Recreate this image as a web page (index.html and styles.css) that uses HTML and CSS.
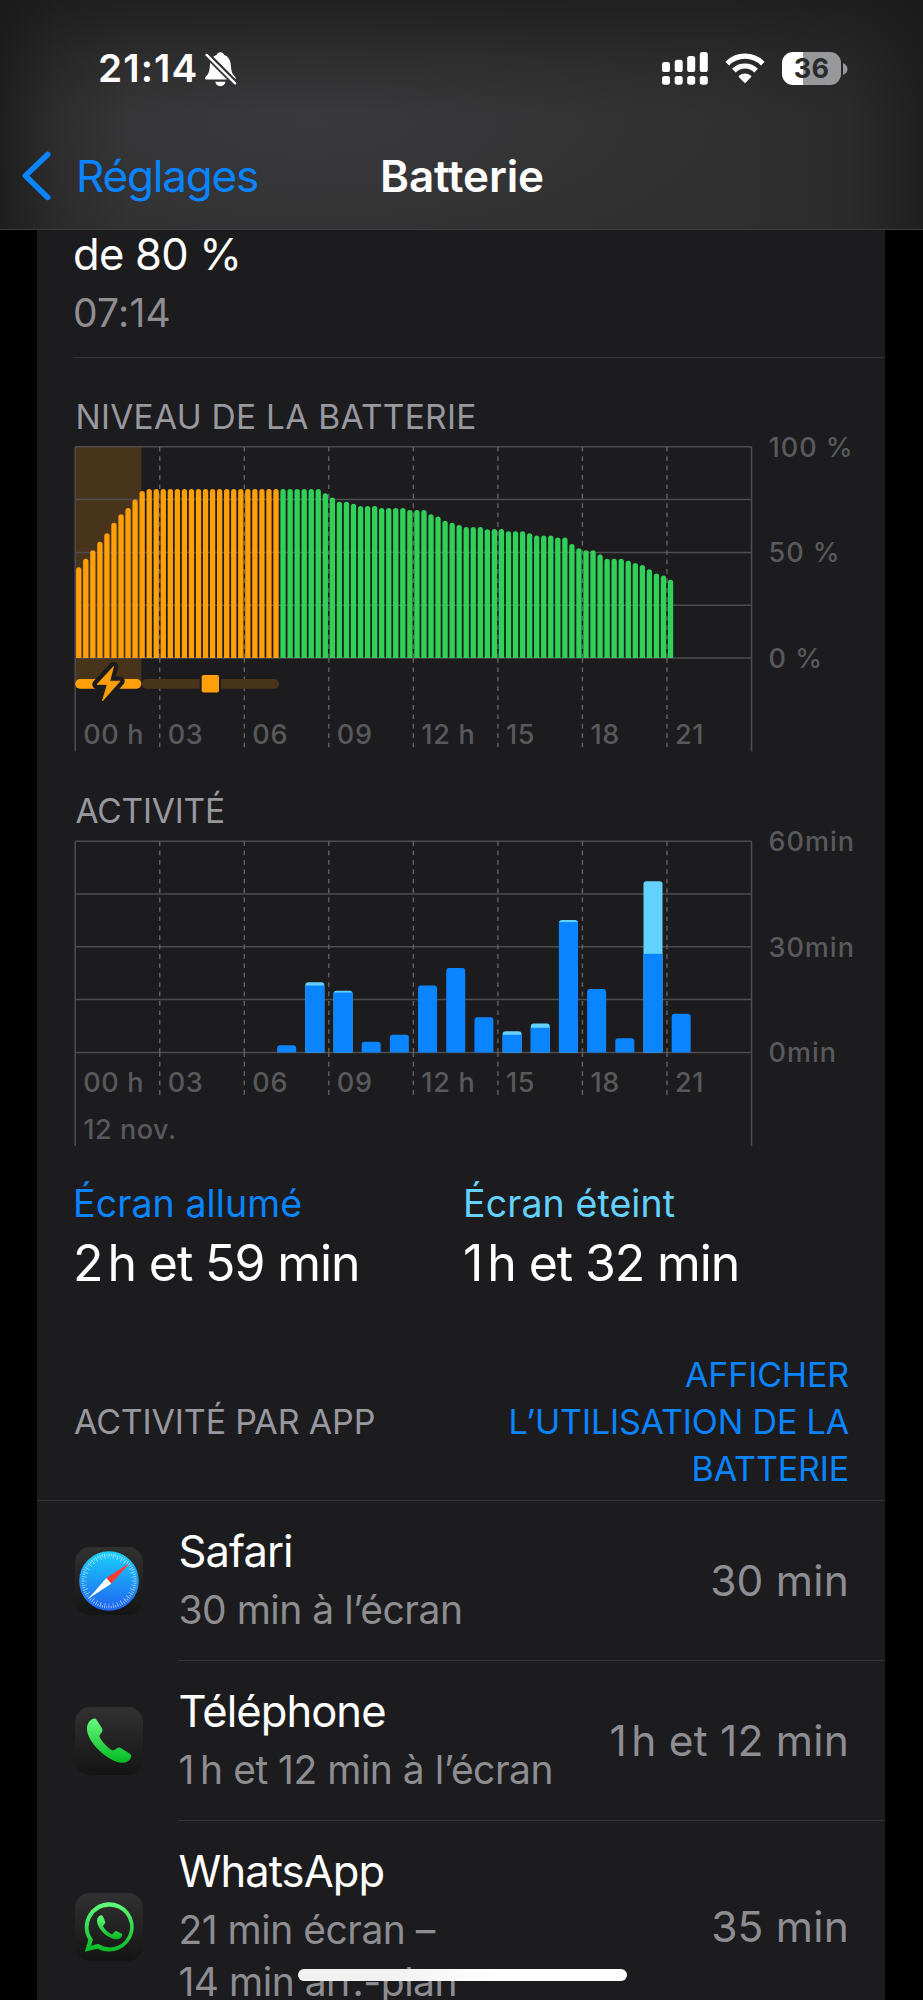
FILE: index.html
```html
<!DOCTYPE html>
<html lang="fr">
<head>
<meta charset="utf-8">
<title>Batterie</title>
<link rel="stylesheet" href="styles.css">
</head>
<body>
<header class="header">
  <div class="status">
    <div class="status-left">
      <span class="clock">21:14</span>
      <svg class="bell" width="32" height="35" viewBox="0 0 32 35">
        <path fill="#fff" d="M1.2 27.6c-1.4 0-1.5-1.7-.3-3C3 22.500 4.400 20.500 4.800 14.500 5.200 8 7.600 4.300 11.700 3.100 12.200 1.200 13.500.300 15.400.300s3.200.900 3.700 2.800c4.100 1.200 6.500 4.900 6.900 11.400.4 6 1.800 8 3.900 10.100 1.200 1.300 1.100 3-.3 3zM10.300 29.800h10.200c-.3 2.700-2.400 4.400-5.100 4.400s-4.800-1.700-5.100-4.400z"/>
        <path stroke="#333335" stroke-width="6.400" stroke-linecap="round" d="M2 3l28.500 28.500"/>
        <path stroke="#fff" stroke-width="2.300" stroke-linecap="round" d="M1.600 2.900l28.500 28.500"/>
      </svg>
    </div>
    <div class="status-right">
      <svg width="46" height="33" viewBox="0 0 46 33" fill="#fff">
        <rect x="0" y="10" width="8" height="10" rx="2.600"/><rect x="12.700" y="7.800" width="8" height="12.200" rx="2.600"/><rect x="25.200" y="4" width="8" height="16" rx="2.600"/><rect x="37.800" y="0" width="8" height="20" rx="2.600"/>
        <rect x="0" y="24" width="8" height="8.700" rx="2.600"/><rect x="12.700" y="24" width="8" height="8.700" rx="2.600"/><rect x="25.200" y="24" width="8" height="8.700" rx="2.600"/><rect x="37.800" y="24" width="8" height="8.700" rx="2.600"/>
      </svg>
      <svg class="wifi" width="40" height="31" viewBox="0 0 40 31">
        <g fill="none" stroke="#fff" stroke-width="5.200"><path d="M2.200 10.600a25 25 0 0 1 35.600 0"/><path d="M8.900 17.600a15.700 15.700 0 0 1 22.200 0"/></g>
        <path fill="#fff" d="M20 30.300l-6-6.100q-.8-.9.200-1.600a9.300 9.300 0 0 1 11.600 0q1 .7.200 1.600z"/>
      </svg>
      <span class="level">36</span>
      <svg class="nub" width="5" height="12" viewBox="0 0 5 12"><path fill="#98989a" d="M0 0c6 2.500 6 9.500 0 12z"/></svg>
    </div>
  </div>
  <nav class="nav">
    <a class="back"><svg width="30" height="50" viewBox="0 0 30 50"><path fill="none" stroke="#0a84ff" stroke-width="5.600" stroke-linecap="round" stroke-linejoin="round" d="M25.700 3.400L3.400 24.800l22.300 21.600"/></svg><span>Réglages</span></a>
    <h1 class="title">Batterie</h1>
  </nav>
</header>
<main class="card">
  <section class="last-charge">
    <p class="charge-text">de 80 %</p>
    <p class="charge-time">07:14</p>
  </section>
  <section class="charts">
    <h2 class="label">NIVEAU DE LA BATTERIE</h2>
    <svg id="levels" class="chart levels" width="847" height="315" viewBox="0 0 847 315"></svg>
    <h2 class="label activity-label">ACTIVITÉ</h2>
    <svg id="activity" class="chart" width="847" height="316" viewBox="0 0 847 316"></svg>
  </section>
  <section class="totals">
    <div><p class="total-name on">Écran allumé</p><p class="total-value"><span class="hour">2</span>h et 59 min</p></div>
    <div><p class="total-name off">Écran éteint</p><p class="total-value"><span class="hour">1</span>h et 32 min</p></div>
  </section>
  <section class="apps-head">
    <h2 class="apps-label">ACTIVITÉ PAR APP</h2>
    <a class="apps-link">AFFICHER<br>L’UTILISATION DE LA<br>BATTERIE</a>
  </section>
  <ul class="apps">
    <li class="app">
      <svg class="icon" viewBox="0 0 68 68">
        <defs>
          <linearGradient id="tile" x2="0" y2="1"><stop stop-color="#313131"/><stop offset="1" stop-color="#141414"/></linearGradient>
          <linearGradient id="sky" x2="0" y2="1"><stop stop-color="#1bd0fb"/><stop offset="1" stop-color="#1e62f0"/></linearGradient>
          <linearGradient id="leaf" x2="0" y2="1"><stop stop-color="#65fb7d"/><stop offset="1" stop-color="#05b922"/></linearGradient>
        </defs>
        <rect width="68" height="68" rx="15" fill="url(#tile)"/>
        <circle cx="34" cy="34" r="29.800" fill="url(#sky)"/>
        <g fill="none" stroke="#fff" stroke-opacity=".65">
          <circle cx="34" cy="34" r="26.200" stroke-width="2.600" pathLength="144" stroke-dasharray=".7 3.300" stroke-dashoffset="2.350"/>
          <circle cx="34" cy="34" r="25" stroke-width="5" pathLength="144" stroke-dasharray=".7 3.300" stroke-dashoffset=".35"/>
        </g>
        <path fill="#ff3b30" d="M55 15.800L31.400 30.900l4.800 5.800z"/>
        <path fill="#fff" d="M13 52L31.400 30.900l4.800 5.800z"/>
      </svg>
      <div class="info"><p class="name">Safari</p><p class="sub">30 min à l’écran</p></div>
      <span class="value">30 min</span>
    </li>
    <li class="app">
      <svg class="icon" viewBox="0 0 68 68">
        <rect width="68" height="68" rx="15" fill="url(#tile)"/>
        <path fill="url(#leaf)" d="M12 20.500c.3-4 2.500-6.800 5.400-8.400 1.700-.9 3.200-.6 4.300 1l5 7.600c1.200 1.800 1 3.400-.4 5.200l-1.200 1.700c-.8 1.200-.8 2 0 3.400 3 5 6.500 8.500 11 11.700 1.400.9 2.300.8 3.500 0l2-1.300c1.600-1.100 3-1.200 4.600-.2l8.300 5.300c1.900 1.200 2.200 2.500 1.300 4.400-1.600 3-4.400 4.700-8.200 4.800-7 .2-17.300-6-24.600-13.500C16.300 35.500 11.500 27.500 12 20.500z"/>
      </svg>
      <div class="info"><p class="name">Téléphone</p><p class="sub"><span class="hour">1</span>h et 12 min à l’écran</p></div>
      <span class="value"><span class="hour">1</span>h et 12 min</span>
    </li>
    <li class="app">
      <svg class="icon" viewBox="0 0 68 68">
        <rect width="68" height="68" rx="15" fill="url(#tile)"/>
        <path fill="url(#leaf)" fill-rule="evenodd" d="M34 9.200a24.700 24.700 0 1 1-11.600 46.500L9.800 58.700l3.500-12A24.700 24.700 0 0 1 34 9.200zM34 13.800a20.300 20.300 0 0 0-16.800 31.600l.8 1.200-2 6.200 7.200-2 1.200.7A20.300 20.300 0 1 0 34 13.800z"/>
        <path fill="url(#leaf)" d="M22 27.500c.1-2.300 1.300-3.800 2.900-4.800 1-.5 2.200-.6 2.900.6l2.300 4.900c.4 1 .2 1.700-.4 2.600l-1.200 1.500c-.5.600-.5 1.100-.1 1.800 1.900 3 4.300 5.200 7.700 6.800.8.400 1.400.3 2-.3l1.700-2c.6-.7 1.200-.8 2-.4l4.500 2.300c.9.500 1 1.100.8 2.100-.6 2.300-2.800 3.700-5.600 3.700-4.300 0-10.300-3.200-14.400-7.800-3.300-3.700-5.200-7.700-5.100-11z"/>
      </svg>
      <div class="info"><p class="name">WhatsApp</p><p class="sub">21 min écran –<br>14 min arr.-plan</p></div>
      <span class="value">35 min</span>
    </li>
  </ul>
</main>
<div class="home-bar"></div>
<script src="charts.js"></script>
</body>
</html>
```
FILE: styles.css
```css
* { box-sizing: border-box; }
body {
  margin: 0;
  width: 923px;
  height: 2000px;
  overflow: hidden;
  background: #000;
  color: #fff;
  font-family: Inter, "Liberation Sans", sans-serif;
}
h1, h2, p, ul { margin: 0; padding: 0; font-weight: 400; }
ul { list-style: none; }
svg { display: block; flex: none; }

.header {
  height: 230px;
  padding-top: 40px;
  border-bottom: 1px solid #3b3b3d;
  background:
    linear-gradient(90deg, rgba(24,24,24,.75), rgba(24,24,24,.25) 6%, rgba(24,24,24,0) 14%, rgba(24,24,24,0) 78%, rgba(24,24,24,.22) 92%, rgba(24,24,24,.7)),
    linear-gradient(180deg, rgba(28,28,28,.8), rgba(28,28,28,.3) 25%, rgba(28,28,28,0) 50%),
    radial-gradient(ellipse 420px 150px at 310px 120px, #3a3a3c, rgba(58,58,60,0)),
    #303031;
}
.status { display: flex; justify-content: space-between; height: 57px; padding: 0 75px 0 98px; }
.status-left, .status-right { display: flex; align-items: center; }
.clock { font-size: 38.7px; font-weight: 600; line-height: 57px; letter-spacing: 1.1px; }
.bell { margin-left: 6.5px; margin-top: 1px; }
.wifi { margin: 0 17px; }
.level {
  width: 59px;
  height: 33px;
  border-radius: 11px;
  background: linear-gradient(90deg, #fff 21px, #98989a 21px);
  color: #2b2b2d;
  font-size: 27px;
  font-weight: 700;
  line-height: 33px;
  letter-spacing: .2px;
  text-align: center;
}
.nub { margin-left: 2px; }

.nav { display: grid; grid-template-columns: 1fr auto 1fr; align-items: center; height: 60px; margin-top: 49px; padding-left: 22px; padding-right: 21px; font-size: 44px; line-height: 60px; }
.back { display: flex; align-items: center; gap: 24px; color: #0a84ff; letter-spacing: -1.19px; }
.title { font-size: 44px; font-weight: 600; letter-spacing: -.14px; }

.card { margin: 0 38px 0 37px; height: 1770px; background: #1c1c1e; }
.last-charge { margin-left: 36px; height: 128px; border-bottom: 1px solid #333335; }
.charge-text { font-size: 43.5px; line-height: 48px; letter-spacing: -.75px; }
.charge-time { margin-top: 11px; color: #8d8d92; font-size: 39px; line-height: 48px; letter-spacing: .2px; }

.charts { padding-top: 39px; }
.label { margin-left: 38.5px; color: #98989f; font-size: 33.5px; line-height: 40px; letter-spacing: .25px; }
.activity-label { margin-top: 36px; letter-spacing: -.2px; }
.chart { margin-top: 3px; overflow: visible; font-size: 27px; font-weight: 500; }
.chart text { fill: #59595c; }

.totals { display: grid; grid-template-columns: 1fr 1fr; padding-top: 31px; }
.totals > div { padding-left: 36px; }
.totals > div + div { padding-left: 2px; }
.total-name { font-size: 37.5px; line-height: 46px; letter-spacing: .1px; }
.on { color: #0a84ff; }
.off { color: #64d2ff; }
.total-value { margin-top: 6px; font-size: 50px; line-height: 60px; letter-spacing: -1.1px; }
.hour { margin-right: .1em; }

.apps-head { display: flex; justify-content: space-between; align-items: center; margin-top: 58px; padding: 0 36px 8px 37px; border-bottom: 1px solid #333335; font-size: 34px; line-height: 47px; }
.apps-label { color: #98989f; font-size: 34px; letter-spacing: -.16px; }
.apps-link { color: #0a84ff; text-align: right; letter-spacing: -.15px; }

.app { position: relative; display: grid; grid-template-columns: 68px 1fr auto; align-items: center; padding: 24px 36px 24px 38px; }
.app + .app { padding-top: 25px; }
.app + .app::before { content: ""; position: absolute; left: 141px; right: 0; top: 0; height: 1px; background: #333335; }
.icon { width: 68px; height: 68px; }
.info { padding-left: 35.5px; }
.name { font-size: 43.5px; line-height: 52px; letter-spacing: -.93px; }
.sub { margin-top: 7px; color: #8d8d92; font-size: 39px; line-height: 52px; letter-spacing: -.5px; white-space: nowrap; }
.sub .hour { margin-right: .16em; }
.value { color: #8d8d92; font-size: 42.5px; line-height: 52px; letter-spacing: .2px; }

.home-bar { position: absolute; left: 298px; top: 1969px; width: 329px; height: 12px; border-radius: 6px; background: linear-gradient(90deg, #f2f2f2, #f2f2f2 30%, #fff 60%); }
```
FILE: charts.js
```js
const LEFT = 38.2;
const HOUR = 28.18;
const HEIGHT = 211.2;
const GRID = '#4d4d50';

function frame(top, dashEnd, sideEnd, yLabels, labelY) {
  const right = LEFT + 24 * HOUR;
  const bottom = top + HEIGHT;
  let s = '';
  for (let i = 0; i < 5; i++) {
    const y = top + i * HEIGHT / 4;
    s += `<path d="M${LEFT} ${y}H${right}" stroke="${GRID}" stroke-width="1.5"/>`;
  }
  for (const x of [LEFT, right]) {
    s += `<path d="M${x} ${top}V${sideEnd}" stroke="${GRID}" stroke-width="1.5"/>`;
  }
  for (let h = 3; h < 24; h += 3) {
    const x = LEFT + h * HOUR;
    s += `<path d="M${x} ${top}V${bottom}M${x} ${bottom}V${dashEnd}" stroke="#626265" stroke-width="1.4" stroke-dasharray="4.7 4.7"/>`;
  }
  ['00 h', '03', '06', '09', '12 h', '15', '18', '21'].forEach((t, i) => {
    s += `<text x="${LEFT + i * 3 * HOUR + 8}" y="${labelY}" letter-spacing=".7">${t}</text>`;
  });
  yLabels.forEach((t, i) => {
    s += `<text x="731.5" y="${top + i * HEIGHT / 2 + 10}" letter-spacing="1">${t}</text>`;
  });
  return s;
}

// Battery level, one value per quarter of an hour
const levels = [43, 47, 51, 55, 59, 64, 68, 71, 75, 79,
  ...Array(25).fill(80), 78, 76, 74, 74, 73, 72, 72, 72, 71, 71, 71, 71, 70, 70, 70, 68, 67, 65, 64, 63,
  62, 62, 62, 61, 61, 61, 60, 60, 60, 59, 58, 58, 58, 57, 57, 54, 52, 51, 51, 49, 47, 47, 47,
  46, 45, 44, 42, 40, 39, 37];
const top1 = 6.8;
const base1 = top1 + HEIGHT;
let chart = `<rect x="${LEFT}" y="${top1}" width="66.200" height="236.500" fill="#48341b"/>`;
chart += frame(top1, 307, 311.5, ['100 %', '50 %', '0 %'], 304);
levels.forEach((v, i) => {
  const x = LEFT + .9 + i * HOUR / 4;
  const y = base1 - v * HEIGHT / 100;
  chart += `<path d="M${x} ${base1}V${y + 2.6}a2.65 2.65 0 0 1 5.300 0V${base1}z" fill="${i < 29 ? '#ff9f0a' : '#30d158'}"/>`;
});
chart += `
  <rect x="${LEFT}" y="239" width="66.200" height="9.700" rx="4.850" fill="#ff9f0a"/>
  <rect x="104.700" y="239" width="137.500" height="9.700" rx="4.850" fill="#48341b"/>
  <rect x="162.700" y="235" width="21.300" height="17.500" fill="#1c1c1e"/>
  <rect x="164.700" y="235" width="17.300" height="17.500" rx="2" fill="#ff9f0a"/>
  <path d="M76.600 226.500L60 244.400H70.300L65.400 261L83 241.200H72.700z" fill="#1c1c1e" stroke="#1c1c1e" stroke-width="9.500" stroke-linejoin="round"/>
  <path d="M76.600 226.500L60 244.400H70.300L65.400 261L83 241.200H72.700z" fill="#ff9f0a" stroke="#ff9f0a" stroke-width=".8" stroke-linejoin="round"/>`;
document.getElementById('levels').innerHTML = chart;

// Minutes per hour: [hour, screen on, total]
const activity = [[7, 2, 2], [8, 19, 19.9], [9, 17, 17.5], [10, 3, 3], [11, 5, 5], [12, 19, 19], [13, 24, 24],
  [14, 10, 10], [15, 5, 6], [16, 7, 8.2], [17, 37, 37.6], [18, 18, 18], [19, 4, 4], [20, 28, 48.6], [21, 11, 11]];
const top2 = 7.200;
const base2 = top2 + HEIGHT;
chart = frame(top2, 260.7, 312, ['60min', '30min', '0min'], 257.7);
chart += `<text x="${LEFT + 8}" y="305" letter-spacing=".550">12 nov.</text>`;
for (const [h, on, total] of activity) {
  const x = LEFT + h * HOUR + 4.7;
  const y = base2 - total * HEIGHT / 60;
  const yOn = base2 - on * HEIGHT / 60;
  chart += `<path d="M${x} ${base2}V${y + 3}a3 3 0 0 1 3-3h13a3 3 0 0 1 3 3V${base2}z" fill="${total > on ? '#64d2ff' : '#0a84ff'}"/>`;
  if (total > on) chart += `<rect x="${x}" y="${yOn}" width="19" height="${base2 - yOn}" fill="#0a84ff"/>`;
}
document.getElementById('activity').innerHTML = chart;
```
